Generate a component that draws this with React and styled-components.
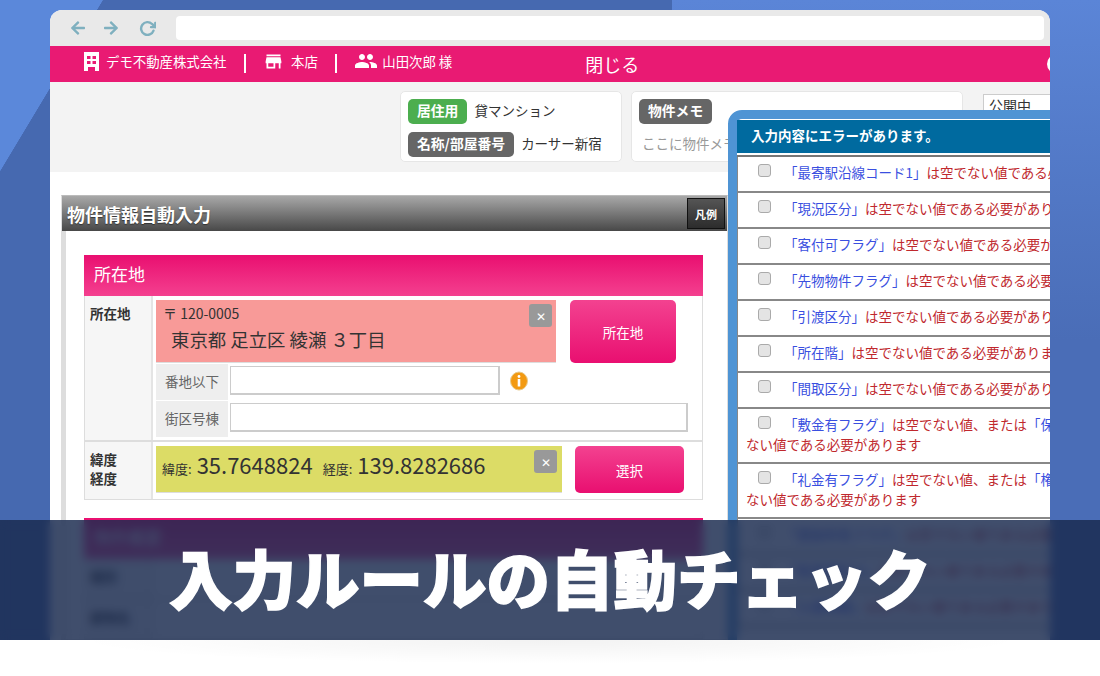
import styled, { createGlobalStyle } from 'styled-components'
import { FaArrowLeft, FaArrowRight } from 'react-icons/fa'
import { FiRotateCw } from 'react-icons/fi'
import { MdStore, MdPeople } from 'react-icons/md'

const GlobalStyle = createGlobalStyle`
    html, body {
        margin: 0;
        background: #fff;
        font-family: "Noto Sans CJK JP", "Liberation Sans", sans-serif;
        color: #333;
    }
    * { box-sizing: border-box; }
`

const Scene = styled.div`
    position: relative;
    height: 640px;
    padding: 10px 50px 0;
    overflow: hidden;
    background:
        linear-gradient(121deg, #5b88da 0, #5b88da 88px, transparent 88.5px),
        linear-gradient(90deg, #4669b0 0, #4669b0 672px, transparent 672.5px),
        linear-gradient(180deg, #5b85d7 0, #4a6db7 340px, #4a6db7 100%);
`

const Browser = styled.div`
    height: 630px;
    background: #fff;
    border-radius: 12px 12px 0 0;
    overflow: hidden;
    position: relative;
`

const Chrome = styled.div`
    height: 36px;
    background: #e9e9e9;
    display: flex;
    align-items: center;
    padding: 0 6px 0 20px;
    color: #7fb0bf;
    font-size: 16px;
`

const NavIcon = styled.span`
    display: flex;
    width: 18px;
    margin-right: ${p => p.$mr}px;
`

const AddressBar = styled.div`
    flex: 1;
    height: 24px;
    background: #fff;
    border-radius: 4px;
`

const PinkNav = styled.div`
    position: relative;
    height: 36px;
    background: #e91a73;
    color: #fff;
    display: flex;
    align-items: center;
    padding-left: 34px;
    font-size: 13.4px;
`

const NavItem = styled.div`
    display: flex;
    align-items: center;
    gap: ${p => p.$gap || 6}px;
    padding-bottom: 6px;
    svg { font-size: ${p => p.$icon || 16}px; flex-shrink: 0; }
`

const NavDivider = styled.div`
    width: 2.5px;
    height: 19px;
    margin: 0 17px 2px 17px;
    background: #fff;
`

const CloseLabel = styled.div`
    font-size: 18px;
    margin-left: 133px;
`

const NavBadge = styled.div`
    position: absolute;
    right: -17px;
    top: 8px;
    width: 20px;
    height: 20px;
    border-radius: 50%;
    background: #fff;
`

const InfoPanel = styled.div`
    height: 90px;
    background: #f3f3f3;
    display: flex;
    align-items: flex-start;
    padding: 9px 0 0 350px;
    gap: 9px;
    font-size: 13.5px;
`

const InfoCard = styled.div`
    flex-shrink: 0;
    width: ${p => p.$w}px;
    height: 71px;
    background: #fff;
    border: 1px solid #e6e6e6;
    border-radius: 5px;
    padding: 7px;
    display: flex;
    flex-direction: column;
    gap: 8px;
`

const InfoRow = styled.div`
    display: flex;
    align-items: center;
    gap: 7px;
    height: 25px;
`

const InfoValue = styled.span`
    margin-top: -4px;
    white-space: nowrap;
`

const Badge = styled.span`
    background: ${p => p.$green ? '#4cae4f' : '#666'};
    color: #fff;
    font-weight: 700;
    font-size: 13.8px;
    height: 25px;
    line-height: 22px;
    padding: 0 9px;
    border-radius: 5px;
    white-space: nowrap;
`

const MemoText = styled.div`
    color: #999;
    font-size: 13.5px;
    padding: 1px 3px 0;
    white-space: nowrap;
`

const StatusSelect = styled.div`
    flex-shrink: 0;
    margin: 3px 0 0 11px;
    width: 90px;
    height: 30px;
    background: #fff;
    border: 1px solid #ccc;
    padding: 0 5px;
    font-size: 14px;
    white-space: nowrap;
`

const AutoPanel = styled.div`
    margin: 23px 0 0 11px;
    width: 667px;
    border: 1px solid #ddd;
    border-top-color: #bbb;
`

const AutoHeader = styled.div`
    height: 35px;
    background: linear-gradient(180deg, #a8a8a8, #484848);
    color: #fff;
    font-size: 18px;
    font-weight: 700;
    display: flex;
    align-items: center;
    justify-content: space-between;
    padding: 0 2px 0 5px;
    text-shadow: 0 1px 1px #333;
`

const LegendButton = styled.div`
    width: 38px;
    height: 31px;
    background: linear-gradient(180deg, #555, #2c2c2c);
    border: 1px solid #111;
    font-size: 11px;
    display: flex;
    align-items: center;
    justify-content: center;
`

const AutoBody = styled.div`
    border-left: 4px solid #ddd;
    padding: 24px 24px 0 18px;
`

const SectionTitle = styled.div`
    height: 41px;
    background: linear-gradient(180deg, #e90f70, #f4408f);
    color: #fff;
    font-size: 17px;
    padding: 0 0 4px 10px;
    display: flex;
    align-items: center;
`

const FormRow = styled.div`
    display: grid;
    grid-template-columns: 68px 1fr;
    border: 1px solid #ddd;
    border-top: ${p => p.$first ? 'none' : '1px solid #ddd'};
    margin-bottom: ${p => p.$last ? '18px' : 0};
    min-height: ${p => p.$h}px;
`

const FormHead = styled.div`
    background: #f6f6f6;
    border-right: 2px solid #e4e4e4;
    padding: 8px 5px;
    font-size: 13.5px;
    font-weight: 700;
    line-height: 19px;
    color: #333;
`

const FormCell = styled.div`
    padding: ${p => p.$top}px 4px 0 3px;
    display: flex;
    flex-direction: column;
    gap: 1px;
`

const ResultRow = styled.div`
    display: flex;
    align-items: flex-start;
    gap: ${p => p.$gap}px;
`

const ResultBox = styled.div`
    position: relative;
    flex-shrink: 0;
    width: ${p => p.$w}px;
    height: ${p => p.$h}px;
    background: ${p => p.$bg};
    border-bottom: 1px solid #ddd;
    padding: ${p => p.$pad};
    color: #333;
`

const ClearButton = styled.div`
    position: absolute;
    top: 4px;
    right: ${p => p.$right}px;
    width: 23px;
    height: 23px;
    background: #999;
    border-radius: 3px;
    color: #fff;
    font-size: 12px;
    display: flex;
    align-items: center;
    justify-content: center;
`

const Zip = styled.div`
    font-size: 14px;
    line-height: 18px;
`

const AddressText = styled.div`
    font-size: 18.4px;
    line-height: 26px;
    margin: 4px 0 0 8px;
    white-space: nowrap;
`

const PinkButton = styled.div`
    flex-shrink: 0;
    width: ${p => p.$w}px;
    height: ${p => p.$h}px;
    background: linear-gradient(180deg, #f34290, #e90f70);
    border-radius: 5px;
    color: #fff;
    font-size: 13.5px;
    display: flex;
    align-items: center;
    justify-content: center;
`

const SubRow = styled.div`
    display: flex;
    align-items: flex-start;
    gap: 2px;
`

const SubLabel = styled.div`
    width: 72px;
    height: 36px;
    padding-bottom: 2px;
    background: #eee;
    color: #666;
    font-size: 13.5px;
    display: flex;
    align-items: center;
    justify-content: center;
`

const TextBox = styled.div`
    width: ${p => p.$w}px;
    height: 29px;
    margin-top: 2px;
    background: #fff;
    border: 2px solid #ccc;
    border-width: 1px 2px 2px 1px;
`

const InfoMark = styled.svg`
    width: 18px;
    height: 20px;
    margin: 7px 0 0 8px;
`

const CoordRow = styled.div`
    display: flex;
    align-items: baseline;
    white-space: nowrap;
`

const CoordLabel = styled.span`
    font-size: 13px;
    margin: 0 5px 0 ${p => p.$ml || 0}px;
`

const CoordValue = styled.span`
    font-size: 22px;
`

const ErrorModal = styled.div`
    position: absolute;
    left: 678px;
    top: 100px;
    width: 420px;
    height: 560px;
    background: #fff;
    border: 9px solid #4f94d4;
    border-radius: 14px 0 0 0;
`

const ErrorHeader = styled.div`
    height: 33px;
    margin-top: 1px;
    background: #006a9f;
    color: #fff;
    font-size: 13.5px;
    font-weight: 700;
    display: flex;
    align-items: center;
    padding: 0 0 3px 14px;
`

const ErrorList = styled.div`
    margin-top: 2px;
    border-top: 2px solid #777;
`

const ErrorRow = styled.div`
    min-height: ${p => p.$tall ? 55 : 36}px;
    border-bottom: 2px solid #888;
    border-left: 1px solid #888;
    padding: 5px 0 0 8px;
    font-size: 13.5px;
    line-height: 20px;
    color: #c0282d;
    white-space: nowrap;
`

const FakeCheck = styled.span`
    display: inline-block;
    width: 13px;
    height: 13px;
    margin: 0 13px 0 12px;
    background: #e4e4e4;
    border: 1px solid #aaa;
    border-radius: 3px;
    vertical-align: 1px;
`

const FieldName = styled.span`
    color: #3a4fe0;
`

const Band = styled.div`
    position: absolute;
    left: 0;
    right: 0;
    bottom: 0;
    height: 120px;
    padding-bottom: 6px;
    background: rgba(25, 42, 78, 0.83);
    backdrop-filter: blur(5px);
    display: flex;
    align-items: center;
    justify-content: center;
`

const Headline = styled.h1`
    margin: 0;
    color: #fff;
    font-size: 63.5px;
    font-weight: 900;
    line-height: 1;
    white-space: nowrap;
    -webkit-text-stroke: 1.5px #fff;
`

const FloorShadow = styled.div`
    height: 24px;
    margin: 0 70px;
    background: radial-gradient(ellipse at 50% 0, rgba(0, 0, 0, 0.05), transparent 70%);
`

const errors = [
    { name: '最寄駅沿線コード1', rest: 'は空でない値である必要があります' },
    { name: '現況区分', rest: 'は空でない値である必要があります' },
    { name: '客付可フラグ', rest: 'は空でない値である必要があります' },
    { name: '先物物件フラグ', rest: 'は空でない値である必要があります' },
    { name: '引渡区分', rest: 'は空でない値である必要があります' },
    { name: '所在階', rest: 'は空でない値である必要があります' },
    { name: '間取区分', rest: 'は空でない値である必要があります' },
    { name: '敷金有フラグ', rest: 'は空でない値、または', other: '保証金有フラグ' },
    { name: '礼金有フラグ', rest: 'は空でない値、または', other: '権利金有フラグ' },
    { name: '更新料有フラグ', rest: 'は空でない値である必要があります' },
    { name: '駐車場区分', rest: 'は空でない値である必要があります' },
    { name: '入居時期', rest: 'は空でない値である必要があります' },
]

function BuildingIcon() {
    return (
        <svg width="15" height="19" viewBox="0 0 15 19">
            <path fill="#fff" fillRule="evenodd" d="M0 0h15v19h-4v-4H4v4H0zM3 4v3h3.5V4zm5.5 0v3H12V4zM3 9v3h3.5V9zm5.5 0v3H12V9z" />
        </svg>
    )
}

function App() {
    return (
        <>
            <GlobalStyle />
            <Scene>
                <Browser>
                    <Chrome>
                        <NavIcon $mr={15}><FaArrowLeft /></NavIcon>
                        <NavIcon $mr={18}><FaArrowRight /></NavIcon>
                        <NavIcon $mr={19}><FiRotateCw size={17} strokeWidth={3.4} /></NavIcon>
                        <AddressBar />
                    </Chrome>
                    <PinkNav>
                        <NavItem $gap={7}><BuildingIcon />デモ不動産株式会社</NavItem>
                        <NavDivider />
                        <NavItem $gap={7} $icon={21}><MdStore />本店</NavItem>
                        <NavDivider />
                        <NavItem $gap={4} $icon={24}><MdPeople />山田次郎 様</NavItem>
                        <CloseLabel>閉じる</CloseLabel>
                        <NavBadge />
                    </PinkNav>
                    <InfoPanel>
                        <InfoCard $w={222}>
                            <InfoRow><Badge $green>居住用</Badge><InfoValue>貸マンション</InfoValue></InfoRow>
                            <InfoRow><Badge>名称/部屋番号</Badge><InfoValue>カーサー新宿</InfoValue></InfoRow>
                        </InfoCard>
                        <InfoCard $w={332}>
                            <InfoRow><Badge>物件メモ</Badge></InfoRow>
                            <MemoText>ここに物件メモを入力してください</MemoText>
                        </InfoCard>
                        <StatusSelect>公開中</StatusSelect>
                    </InfoPanel>
                    <AutoPanel>
                        <AutoHeader>物件情報自動入力<LegendButton>凡例</LegendButton></AutoHeader>
                        <AutoBody>
                            <SectionTitle>所在地</SectionTitle>
                            <FormRow $first $h={145}>
                                <FormHead>所在地</FormHead>
                                <FormCell $top={4}>
                                    <ResultRow $gap={14}>
                                        <ResultBox $w={400} $h={63} $bg="#f89a98" $pad="4px 7px">
                                            <Zip>〒 120-0005</Zip>
                                            <AddressText>東京都 足立区 綾瀬 ３丁目</AddressText>
                                            <ClearButton $right={4}>✕</ClearButton>
                                        </ResultBox>
                                        <PinkButton $w={106} $h={63}>所在地</PinkButton>
                                    </ResultRow>
                                    <SubRow>
                                        <SubLabel>番地以下</SubLabel>
                                        <TextBox $w={270} />
                                        <InfoMark viewBox="0 0 18 20">
                                            <ellipse cx="9" cy="10" rx="8.5" ry="9" fill="#f39a12" stroke="#e8c98a" />
                                            <circle cx="9" cy="5.5" r="1.4" fill="#fff" />
                                            <rect x="7.7" y="8" width="2.6" height="7.5" fill="#fff" />
                                        </InfoMark>
                                    </SubRow>
                                    <SubRow>
                                        <SubLabel>街区号棟</SubLabel>
                                        <TextBox $w={458} />
                                    </SubRow>
                                </FormCell>
                            </FormRow>
                            <FormRow $h={59} $last>
                                <FormHead>緯度<br />経度</FormHead>
                                <FormCell $top={4}>
                                    <ResultRow $gap={13}>
                                        <ResultBox $w={406} $h={47} $bg="#dcdc66" $pad="2px 6px">
                                            <CoordRow>
                                                <CoordLabel>緯度:</CoordLabel>
                                                <CoordValue>35.7648824</CoordValue>
                                                <CoordLabel $ml={10}>経度:</CoordLabel>
                                                <CoordValue>139.8282686</CoordValue>
                                            </CoordRow>
                                            <ClearButton $right={5}>✕</ClearButton>
                                        </ResultBox>
                                        <PinkButton $w={109} $h={47}>選択</PinkButton>
                                    </ResultRow>
                                </FormCell>
                            </FormRow>
                            <SectionTitle>物件概要</SectionTitle>
                            <FormRow $first $h={40}>
                                <FormHead>種別</FormHead>
                                <FormCell $top={4} />
                            </FormRow>
                            <FormRow $h={40}>
                                <FormHead>建物名</FormHead>
                                <FormCell $top={4} />
                            </FormRow>
                        </AutoBody>
                    </AutoPanel>
                    <ErrorModal>
                        <ErrorHeader>入力内容にエラーがあります。</ErrorHeader>
                        <ErrorList>
                            {errors.map(err => (
                                <ErrorRow key={err.name} $tall={!!err.other}>
                                    <FakeCheck />
                                    <FieldName>「{err.name}」</FieldName>{err.rest}
                                    {err.other && (
                                        <>
                                            <FieldName>「{err.other}」</FieldName>は空で<br />
                                            ない値である必要があります
                                        </>
                                    )}
                                </ErrorRow>
                            ))}
                        </ErrorList>
                    </ErrorModal>
                </Browser>
                <Band><Headline>入力ルールの自動チェック</Headline></Band>
            </Scene>
            <FloorShadow />
        </>
    )
}

export default App
